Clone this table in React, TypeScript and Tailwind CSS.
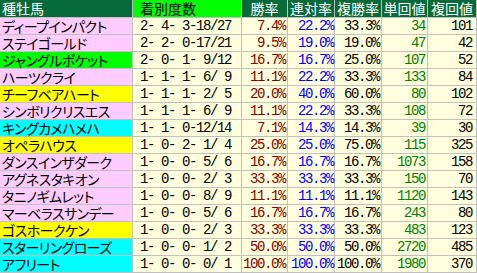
import React from 'react';

type Row = {
  name: string;
  color: string;
  record: string;
  win: string;
  top2: string;
  top3: string;
  tan: string;
  fuku: string;
};

const PINK = 'bg-[#ffccff]';
const GREEN = 'bg-[#00ff00]';
const YELLOW = 'bg-[#ffff00]';
const CYAN = 'bg-[#00ffff]';

const rows: Row[] = [
  { name: 'ディープインパクト', color: PINK, record: '2- 4- 3-18/27', win: '7.4%', top2: '22.2%', top3: '33.3%', tan: '34', fuku: '101' },
  { name: 'ステイゴールド', color: PINK, record: '2- 2- 0-17/21', win: '9.5%', top2: '19.0%', top3: '19.0%', tan: '47', fuku: '42' },
  { name: 'ジャングルポケット', color: GREEN, record: '2- 0- 1- 9/12', win: '16.7%', top2: '16.7%', top3: '25.0%', tan: '107', fuku: '52' },
  { name: 'ハーツクライ', color: PINK, record: '1- 1- 1- 6/ 9', win: '11.1%', top2: '22.2%', top3: '33.3%', tan: '133', fuku: '84' },
  { name: 'チーフベアハート', color: YELLOW, record: '1- 1- 1- 2/ 5', win: '20.0%', top2: '40.0%', top3: '60.0%', tan: '80', fuku: '102' },
  { name: 'シンボリクリスエス', color: PINK, record: '1- 1- 1- 6/ 9', win: '11.1%', top2: '22.2%', top3: '33.3%', tan: '108', fuku: '72' },
  { name: 'キングカメハメハ', color: CYAN, record: '1- 1- 0-12/14', win: '7.1%', top2: '14.3%', top3: '14.3%', tan: '39', fuku: '30' },
  { name: 'オペラハウス', color: YELLOW, record: '1- 0- 2- 1/ 4', win: '25.0%', top2: '25.0%', top3: '75.0%', tan: '115', fuku: '325' },
  { name: 'ダンスインザダーク', color: PINK, record: '1- 0- 0- 5/ 6', win: '16.7%', top2: '16.7%', top3: '16.7%', tan: '1073', fuku: '158' },
  { name: 'アグネスタキオン', color: PINK, record: '1- 0- 0- 2/ 3', win: '33.3%', top2: '33.3%', top3: '33.3%', tan: '150', fuku: '70' },
  { name: 'タニノギムレット', color: PINK, record: '1- 0- 0- 8/ 9', win: '11.1%', top2: '11.1%', top3: '11.1%', tan: '1120', fuku: '143' },
  { name: 'マーベラスサンデー', color: PINK, record: '1- 0- 0- 5/ 6', win: '16.7%', top2: '16.7%', top3: '16.7%', tan: '243', fuku: '80' },
  { name: 'ゴスホークケン', color: YELLOW, record: '1- 0- 0- 2/ 3', win: '33.3%', top2: '33.3%', top3: '33.3%', tan: '483', fuku: '123' },
  { name: 'スターリングローズ', color: CYAN, record: '1- 0- 0- 1/ 2', win: '50.0%', top2: '50.0%', top3: '50.0%', tan: '2720', fuku: '485' },
  { name: 'アフリート', color: CYAN, record: '1- 0- 0- 0/ 1', win: '100.0%', top2: '100.0%', top3: '100.0%', tan: '1980', fuku: '370' },
];

const jp = "font-['Noto_Sans_CJK_JP',sans-serif]";
const mono = "font-['Liberation_Mono',monospace] text-[14px] tracking-[-1.4px] whitespace-pre";
const cell = 'flex items-center bg-[#ffffdd] leading-[16px]';

function Header({ children, className = '' }: { children: React.ReactNode; className?: string }) {
  return (
    <div className={`flex items-center text-[14px] leading-[17px] ${jp} ${className}`}>
      {children}
    </div>
  );
}

export default function App() {
  return (
    <div className="w-[477px] h-[273px] bg-white">
      <div className="grid grid-cols-[132px_108px_45px_46px_46px_45px_48px] grid-rows-[17px] auto-rows-[16px] gap-px bg-[#c0c0c0] pr-px pb-px">
        <Header className="bg-[#066a3a] text-white pl-[2px]">種牡馬</Header>
        <Header className="bg-[#00ff00] text-black pl-[7px]">着別度数</Header>
        <Header className="bg-[#066a3a] text-white justify-center">勝率</Header>
        <Header className="bg-[#066a3a] text-white justify-center">連対率</Header>
        <Header className="bg-[#066a3a] text-white justify-center">複勝率</Header>
        <Header className="bg-[#066a3a] text-white justify-center">単回値</Header>
        <Header className="bg-[#066a3a] text-white justify-center">複回値</Header>

        {rows.map((r) => (
          <React.Fragment key={r.name}>
            <div className={`flex items-center pl-[2px] text-[14px] tracking-[-0.6px] leading-[16px] text-black [font-feature-settings:'palt'] ${jp} ${r.color}`}>
              {r.name}
            </div>
            <div className={`${cell} ${mono} pl-[7px] text-black`}>{r.record}</div>
            <div className={`${cell} ${mono} justify-end pr-[2px] text-[#800000]`}>{r.win}</div>
            <div className={`${cell} ${mono} justify-end pr-[1px] text-[#0000ff]`}>{r.top2}</div>
            <div className={`${cell} ${mono} justify-end pr-[2px] text-black`}>{r.top3}</div>
            <div className={`${cell} ${mono} justify-end pr-[2px] text-[#008000]`}>{r.tan}</div>
            <div className={`${cell} ${mono} justify-end pr-[4px] text-black`}>{r.fuku}</div>
          </React.Fragment>
        ))}
      </div>
    </div>
  );
}
